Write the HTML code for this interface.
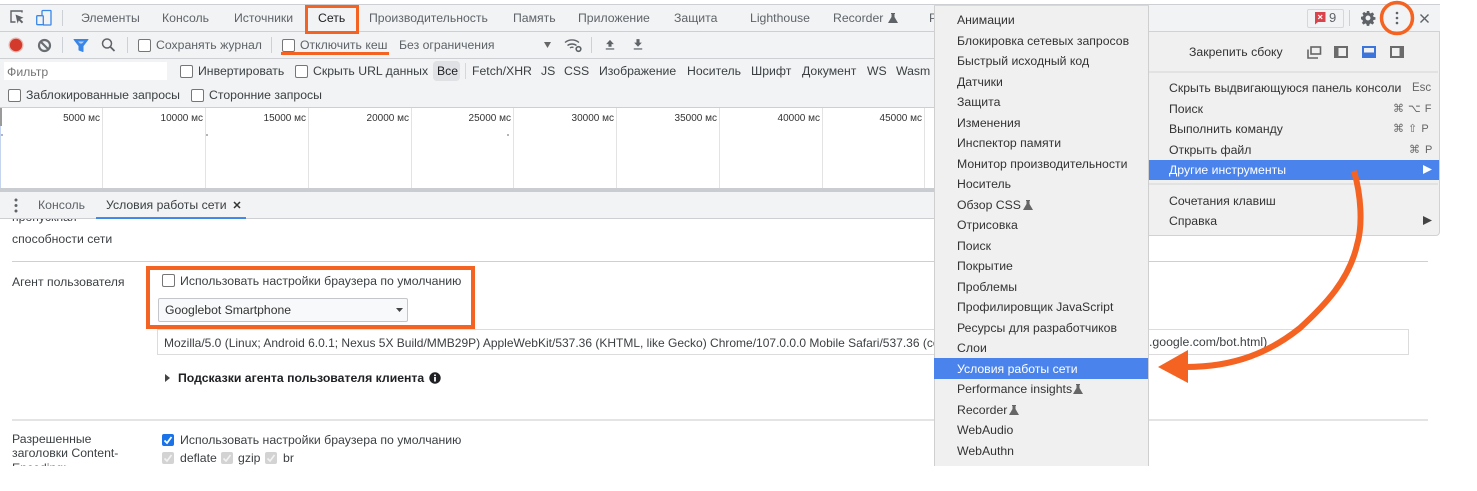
<!DOCTYPE html>
<html lang="ru"><head><meta charset="utf-8"><title>DevTools</title>
<style>
html,body{margin:0;padding:0;background:#fff}
#r{position:relative;width:1477px;height:491px;overflow:hidden;background:#fff;font-family:"Liberation Sans",sans-serif;font-size:12.25px;color:#3c4043}
.b{position:absolute}
.t{position:absolute;white-space:nowrap;line-height:16px;height:16px}
.g{color:#5f6368}
.cb{position:absolute;width:11px;height:11px;border:1px solid #767676;border-radius:2px;background:#fff}
.sep{position:absolute;width:1px;height:16px;background:#cdd0d4}
.v{position:absolute;top:108px;width:1px;height:80px;background:#e3e3e3}
.ms{position:absolute;top:111px;width:70px;text-align:right;font-size:10px;line-height:16px;color:#333}
svg{position:absolute;overflow:visible}
.mi{position:absolute;left:957px;white-space:nowrap;line-height:16px;color:#333}
.si{position:absolute;left:1169px;white-space:nowrap;line-height:16px;color:#333}
.k{position:absolute;white-space:nowrap;line-height:16px;color:#666}
</style></head><body><div id="r">

<!-- devtools chrome backgrounds -->
<div class="b" style="left:0;top:4px;width:1440px;height:188px;background:#f1f3f4;border-top:1px solid #cdcfd2;box-sizing:border-box"></div>
<div class="b" style="left:0;top:31px;width:1440px;height:1px;background:#cdcfd2"></div>
<div class="b" style="left:0;top:58px;width:1440px;height:1px;background:#cdcfd2"></div>
<div class="b" style="left:0;top:107px;width:1440px;height:1px;background:#cdcfd2"></div>
<div class="b" style="left:0;top:108px;width:1440px;height:80px;background:#fff"></div>
<div class="b" style="left:0;top:188px;width:1440px;height:4px;background:#c9ccd0"></div>
<div class="b" style="left:0;top:192px;width:1440px;height:26px;background:#f1f3f4"></div>
<div class="b" style="left:0;top:218px;width:1440px;height:1px;background:#cdcfd2"></div>

<!-- top tab bar -->
<svg style="left:0;top:0" width="70" height="32">
<path d="M22 12.500V11H11v11h4.500" fill="none" stroke="#5f6368" stroke-width="1.400"/>
<path d="M15.500 14.500l8 3.200-3.300 1.300 3 3-1.400 1.400-3-3-1.200 3.200z" fill="#5f6368"/>
<path d="M42 15V11.500a1 1 0 0 1 1-1h7.500a.5.5 0 0 1 .5.5v13.500a.5.5 0 0 1-.5.5H43" fill="none" stroke="#1a73e8" stroke-width="1.300" opacity=".85"/>
<rect x="36.700" y="15.700" width="6.600" height="9" rx="1" fill="none" stroke="#1a73e8" stroke-width="1.300" opacity=".85"/>
</svg>
<div class="sep" style="left:62px;top:10px"></div>
<span class="t g" style="left:81px;top:10px">Элементы</span>
<span class="t g" style="left:162px;top:10px">Консоль</span>
<span class="t g" style="left:234px;top:10px">Источники</span>
<span class="t" style="left:318px;top:10px;color:#202124">Сеть</span>
<span class="t g" style="left:369px;top:10px">Производительность</span>
<span class="t g" style="left:513px;top:10px">Память</span>
<span class="t g" style="left:578px;top:10px">Приложение</span>
<span class="t g" style="left:674px;top:10px">Защита</span>
<span class="t g" style="left:750px;top:10px">Lighthouse</span>
<span class="t g" style="left:833px;top:10px">Recorder</span>
<svg style="left:888px;top:13px" width="10" height="10"><path d="M3 0h4v1H6.500v3L10 10H0L3.500 4V1H3z" fill="#5f6368"/></svg>
<span class="t g" style="left:929px;top:10px">P</span>

<!-- right tools -->
<div class="b" style="left:1307px;top:9px;width:35px;height:17px;border:1px solid #d5d7da;border-radius:2px"></div>
<svg style="left:1314px;top:12px" width="13" height="13"><path d="M1 0h10.500v10H4l-3 2.500z" fill="#d9434b"/><path d="M4.200 3l4 4M8.200 3l-4 4" stroke="#fff" stroke-width="1.200"/></svg>
<span class="t g" style="left:1329px;top:10px;font-size:13px">9</span>
<div class="sep" style="left:1349px;top:10px"></div>
<svg style="left:1361px;top:11px" width="14" height="14" viewBox="0 0 16 16"><path fill="#5f6368" fill-rule="evenodd" d="M6.600 0h2.800l.4 2.200 1.300.6 1.900-1.300 2 2-1.300 1.900.6 1.300 2.200.4v2.800l-2.200.4-.6 1.300 1.300 1.900-2 2-1.900-1.300-1.300.6-.4 2.200H6.600l-.4-2.200-1.300-.6-1.900 1.300-2-2 1.300-1.900-.6-1.300L0 9.400V6.600l2.200-.4.6-1.300-1.300-1.900 2-2 1.900 1.300 1.300-.6zM8 5.200a2.800 2.800 0 1 0 0 5.600 2.800 2.800 0 0 0 0-5.600z"/></svg>
<svg style="left:1390px;top:10px" width="14" height="16"><circle cx="7" cy="3" r="1.300" fill="#5f6368"/><circle cx="7" cy="8" r="1.300" fill="#5f6368"/><circle cx="7" cy="13" r="1.300" fill="#5f6368"/></svg>
<svg style="left:1420px;top:14px" width="9" height="9"><path d="M.5.500l8 8M8.500.500l-8 8" stroke="#5f6368" stroke-width="1.400"/></svg>

<!-- second toolbar -->
<svg style="left:0;top:32px" width="130" height="27">
<circle cx="16" cy="13" r="7.500" fill="#e8b7b2"/><circle cx="16" cy="13" r="6.200" fill="#d33a2c"/>
<circle cx="44.500" cy="13.500" r="5.500" fill="none" stroke="#6a6d71" stroke-width="2.200"/><path d="M40.500 9.500l8 8" stroke="#6a6d71" stroke-width="2.200"/>
<path d="M74 7.500h14l-5 6.500v5.500l-4-1.500v-4z" fill="#1a73e8" stroke="#1a73e8" stroke-linejoin="round" opacity=".85"/>
<path d="M78 9.500h6l-2 2h-2z" fill="#fff" opacity=".6"/>
<circle cx="107" cy="11.500" r="4.500" fill="none" stroke="#5f6368" stroke-width="1.500"/><path d="M110.500 15l4 4" stroke="#5f6368" stroke-width="1.800"/>
</svg>
<div class="sep" style="left:62px;top:37px"></div>
<div class="sep" style="left:127px;top:37px"></div>
<div class="cb" style="left:138px;top:39px"></div>
<span class="t g" style="left:156px;top:37px">Сохранять журнал</span>
<div class="sep" style="left:271px;top:37px"></div>
<div class="cb" style="left:282px;top:39px"></div>
<span class="t g" style="left:300px;top:37px">Отключить кеш</span>
<span class="t g" style="left:399px;top:37px">Без ограничения</span>
<svg style="left:544px;top:42px" width="7" height="6"><path d="M0 0h7L3.500 6z" fill="#666"/></svg>
<svg style="left:564px;top:37px" width="20" height="16">
<path d="M1 5.500a11 11 0 0 1 14 0M3.500 8.500a7.500 7.500 0 0 1 9 0M6 11a3.500 3.500 0 0 1 3.500-.5" fill="none" stroke="#5f6368" stroke-width="1.400"/>
<circle cx="14.500" cy="12" r="2.300" fill="none" stroke="#5f6368" stroke-width="1.600"/></svg>
<div class="sep" style="left:591px;top:37px"></div>
<svg style="left:605px;top:39px" width="10" height="11" viewBox="0 0 13 14"><path d="M6.500 1L11.500 6.500H8.500V10h-4V6.500H1.500z" fill="#5f6368"/><rect x="1" y="12" width="11" height="1.600" fill="#5f6368"/></svg>
<svg style="left:633px;top:39px" width="10" height="11" viewBox="0 0 13 14"><path d="M4.500 0h4v4.500h3L6.500 10 1.500 4.500h3z" fill="#5f6368"/><rect x="1" y="12" width="11" height="1.600" fill="#5f6368"/></svg>

<!-- filter row -->
<div class="b" style="left:4px;top:62px;width:163px;height:18px;background:#fff"></div>
<span class="t" style="left:7px;top:64px;color:#757575">Фильтр</span>
<div class="cb" style="left:180px;top:65px"></div>
<span class="t" style="left:198px;top:63px">Инвертировать</span>
<div class="cb" style="left:295px;top:65px"></div>
<span class="t" style="left:313px;top:63px">Скрыть URL данных</span>
<div class="b" style="left:433px;top:61px;width:27px;height:20px;background:#dfe1e5;border-radius:4px"></div>
<span class="t" style="left:437px;top:63px;color:#202124">Все</span>
<div class="b" style="left:465px;top:63px;width:1px;height:16px;background:#d5d7da"></div>
<span class="t" style="left:472px;top:63px">Fetch/XHR</span>
<span class="t" style="left:541px;top:63px">JS</span>
<span class="t" style="left:564px;top:63px">CSS</span>
<span class="t" style="left:599px;top:63px">Изображение</span>
<span class="t" style="left:687px;top:63px">Носитель</span>
<span class="t" style="left:751px;top:63px">Шрифт</span>
<span class="t" style="left:802px;top:63px">Документ</span>
<span class="t" style="left:867px;top:63px">WS</span>
<span class="t" style="left:896px;top:63px">Wasm</span>

<div class="cb" style="left:8px;top:89px"></div>
<span class="t" style="left:26px;top:87px">Заблокированные запросы</span>
<div class="cb" style="left:191px;top:89px"></div>
<span class="t" style="left:209px;top:87px">Сторонние запросы</span>

<!-- timeline -->
<div class="b" style="left:0;top:108px;width:2px;height:18px;background:#9a9a9a"></div>
<div class="b" style="left:0;top:126px;width:1px;height:62px;background:#c5d4ef"></div>
<div class="b" style="left:1px;top:134px;width:2px;height:2px;background:#a9b6cc"></div>
<div class="b" style="left:206px;top:134px;width:2px;height:2px;background:#b5b5b5"></div>
<div class="b" style="left:507px;top:134px;width:2px;height:2px;background:#b5b5b5"></div>
<div class="v" style="left:102px"></div><div class="v" style="left:205px"></div><div class="v" style="left:308px"></div><div class="v" style="left:411px"></div><div class="v" style="left:513px"></div><div class="v" style="left:616px"></div><div class="v" style="left:719px"></div><div class="v" style="left:822px"></div><div class="v" style="left:924px"></div>
<span class="ms" style="left:30px">5000 мс</span>
<span class="ms" style="left:133px">10000 мс</span>
<span class="ms" style="left:236px">15000 мс</span>
<span class="ms" style="left:339px">20000 мс</span>
<span class="ms" style="left:441px">25000 мс</span>
<span class="ms" style="left:544px">30000 мс</span>
<span class="ms" style="left:647px">35000 мс</span>
<span class="ms" style="left:750px">40000 мс</span>
<span class="ms" style="left:852px">45000 мс</span>

<!-- drawer tabs -->
<svg style="left:10px;top:198px" width="12" height="16"><circle cx="6" cy="2" r="1.500" fill="#5f6368"/><circle cx="6" cy="7.500" r="1.500" fill="#5f6368"/><circle cx="6" cy="13" r="1.500" fill="#5f6368"/></svg>
<span class="t g" style="left:38px;top:197px">Консоль</span>
<span class="t" style="left:106px;top:197px">Условия работы сети</span>
<svg style="left:233px;top:201px" width="8" height="8"><path d="M1 1l6 6M7 1L1 7" stroke="#333" stroke-width="1.500"/></svg>
<div class="b" style="left:96px;top:217px;width:150px;height:2px;background:#1a73e8;opacity:.8"></div>

<!-- drawer content -->
<div class="b" style="left:0;top:219px;width:1440px;height:247px;overflow:hidden;background:#fff">
 <span class="t" style="left:12px;top:-10px">пропускная</span>
 <span class="t" style="left:12px;top:12px">способности сети</span>
 <div class="b" style="left:12px;top:42px;width:1416px;height:1px;background:#cfcfcf"></div>
 <span class="t" style="left:12px;top:55px">Агент пользователя</span>
 <div class="cb" style="left:162px;top:55px"></div>
 <span class="t" style="left:180px;top:54px;font-size:12.300px">Использовать настройки браузера по умолчанию</span>
 <div class="b" style="left:158px;top:79px;width:250px;height:24px;box-sizing:border-box;background:#f8f9fa;border:1px solid #c4c6c9;border-radius:2px"></div>
 <span class="t" style="left:165px;top:83px;font-size:12.200px;color:#333">Googlebot Smartphone</span>
 <svg style="left:396px;top:89px" width="7" height="4"><path d="M0 0h7L3.500 4z" fill="#444"/></svg>
 <div class="b" style="left:157px;top:110px;width:1252px;height:26px;box-sizing:border-box;border:1px solid #dcdcdc;background:#fff"></div>
 <span class="t" style="left:164px;top:116px;font-size:12px">Mozilla/5.0 (Linux; Android 6.0.1; Nexus 5X Build/MMB29P) AppleWebKit/537.36 (KHTML, like Gecko) Chrome/107.0.0.0 Mobile Safari/537.36 (compatible; Googlebot/2.1; +http://www</span>
 <span class="t" style="left:1149px;top:115px;font-size:12.300px">.google.com/bot.html)</span>
 <svg style="left:165px;top:155px" width="5" height="8"><path d="M0 0l5 4-5 4z" fill="#444"/></svg>
 <span class="t" style="left:178px;top:151px;font-weight:bold;color:#202124">Подсказки агента пользователя клиента</span>
 <svg style="left:429px;top:153px" width="12" height="12"><circle cx="6" cy="6" r="5.700" fill="#202124"/><rect x="5.100" y="5" width="1.800" height="4.500" fill="#fff"/><rect x="5.100" y="2.500" width="1.800" height="1.600" fill="#fff"/></svg>
 <div class="b" style="left:12px;top:200px;width:1416px;height:2px;background:#e4e4e4"></div>
 <span class="t" style="left:12px;top:212px">Разрешенные</span>
 <span class="t" style="left:12px;top:226px">заголовки Content-</span>
 <span class="t" style="left:12px;top:241px">Encoding:</span>
 <svg style="left:162px;top:215px" width="12" height="12"><rect width="12" height="12" rx="2" fill="#1a73e8"/><path d="M2.500 6.500l2.500 2.500 4.500-6" fill="none" stroke="#fff" stroke-width="1.800"/></svg>
 <span class="t" style="left:180px;top:213px;font-size:12.300px">Использовать настройки браузера по умолчанию</span>
 <svg style="left:162px;top:233px" width="12" height="12"><rect width="12" height="12" rx="2" fill="#d3d3d3"/><path d="M2.500 6.500l2.500 2.500 4.500-6" fill="none" stroke="#f3f3f3" stroke-width="1.600"/></svg>
 <span class="t" style="left:180px;top:231px">deflate</span>
 <svg style="left:221px;top:233px" width="12" height="12"><rect width="12" height="12" rx="2" fill="#d3d3d3"/><path d="M2.500 6.500l2.500 2.500 4.500-6" fill="none" stroke="#f3f3f3" stroke-width="1.600"/></svg>
 <span class="t" style="left:238px;top:231px">gzip</span>
 <svg style="left:265px;top:233px" width="12" height="12"><rect width="12" height="12" rx="2" fill="#d3d3d3"/><path d="M2.500 6.500l2.500 2.500 4.500-6" fill="none" stroke="#f3f3f3" stroke-width="1.600"/></svg>
 <span class="t" style="left:283px;top:231px">br</span>
</div>

<!-- second (main) menu -->
<div class="b" style="left:1148px;top:31px;width:292px;height:205px;box-sizing:border-box;background:#f0f0f0;border:1px solid #d2d2d2;border-left:0;border-radius:0 0 4px 0"></div>
<span class="si" style="left:1189px;top:44px">Закрепить сбоку</span>
<svg style="left:1307px;top:46px" width="100" height="13">
<rect x="4" y="1" width="9.500" height="7" fill="none" stroke="#666" stroke-width="1.600"/>
<path d="M1 3.500V12h10" fill="none" stroke="#666" stroke-width="1.600"/>
<rect x="27" y="0" width="14" height="12" fill="#6b6b6b"/><rect x="31.500" y="2" width="7.500" height="8" fill="#f0f0f0"/>
<rect x="55" y="0" width="14" height="12" fill="#3b74db"/><rect x="57" y="2" width="10" height="4.500" fill="#f0f0f0"/>
<rect x="83" y="0" width="14" height="12" fill="#6b6b6b"/><rect x="85" y="2" width="7.500" height="8" fill="#f0f0f0"/>
</svg>
<div class="b" style="left:1148px;top:71px;width:290px;height:2px;background:#e2e2e2"></div>
<span class="si" style="top:80px">Скрыть выдвигающуюся панель консоли</span><span class="k" style="left:1412px;top:80px;font-size:11.500px">Esc</span>
<span class="si" style="top:101px">Поиск</span><span class="k" style="left:1393px;top:101px;font-size:11px;letter-spacing:1px;word-spacing:-1px">⌘ ⌥ F</span>
<span class="si" style="top:121px">Выполнить команду</span><span class="k" style="left:1393px;top:121px;font-size:11px;letter-spacing:1px;word-spacing:-1px">⌘ ⇧ P</span>
<span class="si" style="top:142px">Открыть файл</span><span class="k" style="left:1409px;top:142px;font-size:11px;letter-spacing:1px">⌘ P</span>
<div class="b" style="left:1148px;top:160px;width:291px;height:20px;background:#4a83ec"></div>
<span class="si" style="top:162px;color:#fff">Другие инструменты</span>
<svg style="left:1423px;top:165px" width="9" height="9"><path d="M0 0l9 4.500L0 9z" fill="#fff"/></svg>
<div class="b" style="left:1148px;top:183px;width:290px;height:2px;background:#e2e2e2"></div>
<span class="si" style="top:193px">Сочетания клавиш</span>
<span class="si" style="top:213px">Справка</span>
<svg style="left:1423px;top:216px" width="9" height="9"><path d="M0 0l9 4.500L0 9z" fill="#444"/></svg>

<!-- submenu -->
<div class="b" style="left:934px;top:5px;width:215px;height:461px;box-sizing:border-box;background:#f0f0f0;border-left:1px solid #cfcfcf;border-right:1px solid #cfcfcf;border-top:1px solid #d8d8d8"></div>
<div class="b" style="left:934px;top:358px;width:214px;height:21px;background:#4a83ec"></div>
<span class="mi" style="top:12px">Анимации</span>
<span class="mi" style="top:33px">Блокировка сетевых запросов</span>
<span class="mi" style="top:53px">Быстрый исходный код</span>
<span class="mi" style="top:74px">Датчики</span>
<span class="mi" style="top:94px">Защита</span>
<span class="mi" style="top:115px">Изменения</span>
<span class="mi" style="top:135px">Инспектор памяти</span>
<span class="mi" style="top:156px">Монитор производительности</span>
<span class="mi" style="top:176px">Носитель</span>
<span class="mi" style="top:197px">Обзор CSS</span>
<svg style="left:1023px;top:200px" width="10" height="10"><path d="M3 0h4v1H6.500v3L10 10H0L3.500 4V1H3z" fill="#666"/></svg>
<span class="mi" style="top:217px">Отрисовка</span>
<span class="mi" style="top:238px">Поиск</span>
<span class="mi" style="top:258px">Покрытие</span>
<span class="mi" style="top:279px">Проблемы</span>
<span class="mi" style="top:299px">Профилировщик JavaScript</span>
<span class="mi" style="top:320px">Ресурсы для разработчиков</span>
<span class="mi" style="top:340px">Слои</span>
<span class="mi" style="top:361px;color:#fff">Условия работы сети</span>
<span class="mi" style="top:381px">Performance insights</span>
<svg style="left:1073px;top:384px" width="10" height="10"><path d="M3 0h4v1H6.500v3L10 10H0L3.500 4V1H3z" fill="#666"/></svg>
<span class="mi" style="top:402px">Recorder</span>
<svg style="left:1009px;top:405px" width="10" height="10"><path d="M3 0h4v1H6.500v3L10 10H0L3.500 4V1H3z" fill="#666"/></svg>
<span class="mi" style="top:422px">WebAudio</span>
<span class="mi" style="top:443px">WebAuthn</span>

<!-- orange annotations -->
<div class="b" style="left:305px;top:5px;width:54px;height:29px;box-sizing:border-box;border:3.500px solid #f46321"></div>
<div class="b" style="left:281px;top:52px;width:108px;height:3px;background:#f46321"></div>
<div class="b" style="left:146px;top:266px;width:329px;height:63px;box-sizing:border-box;border:4px solid #f46321"></div>
<svg style="left:0;top:0" width="1477" height="491">
<circle cx="1397" cy="18" r="15.500" fill="none" stroke="#f46321" stroke-width="3.500"/>
<path d="M1354 171C1361 195 1363 225 1357 245C1349 280 1325 305 1300 328C1270 352 1235 367 1186 367" fill="none" stroke="#f46321" stroke-width="6"/>
<path d="M1158 367L1188 350V383z" fill="#f46321"/>
</svg>

</div></body></html>
